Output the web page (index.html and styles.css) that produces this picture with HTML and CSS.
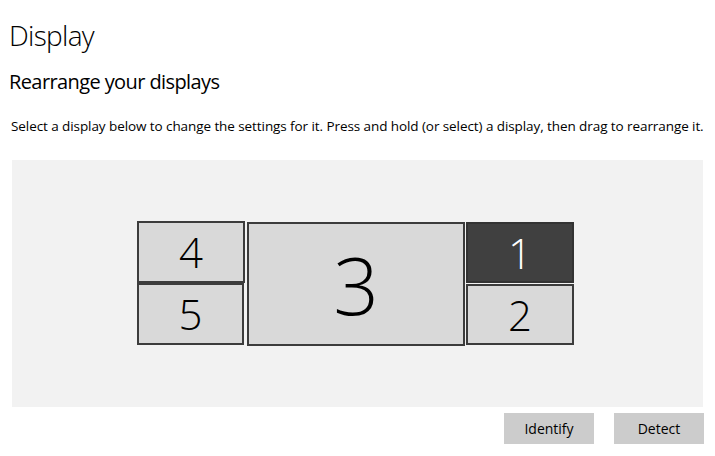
FILE: index.html
```html
<!DOCTYPE html>
<html lang="en">
<head>
<meta charset="utf-8">
<title>Display</title>
<link rel="stylesheet" href="styles.css">
</head>
<body>
<main class="page">
  <h1 class="title">Display</h1>
  <h2 class="subtitle">Rearrange your displays</h2>
  <p class="desc">Select a display below to change the settings for it. Press and hold (or select) a display, then drag to rearrange it.</p>
  <div class="canvas">
    <div class="mon mon-4"><span>4</span></div>
    <div class="mon mon-5"><span>5</span></div>
    <div class="mon mon-3"><span>3</span></div>
    <div class="mon mon-1 selected"><span>1</span></div>
    <div class="mon mon-2"><span>2</span></div>
  </div>
  <div class="actions">
    <button class="btn">Identify</button>
    <button class="btn">Detect</button>
  </div>
</main>
</body>
</html>
```

FILE: styles.css
```css
* { box-sizing: border-box; }
html, body { margin: 0; padding: 0; background: #fff; }
body {
  font-family: "Open Sans", "Noto Sans", "Liberation Sans", sans-serif;
  color: #000;
  width: 715px;
  height: 456px;
  overflow: hidden;
}
.page {
  display: flex;
  flex-direction: column;
  padding: 0 12px 0 12px;
}
.title {
  margin: 16px 0 0 -3px;
  font-size: 28px;
  font-weight: 300;
  line-height: 38px;
  letter-spacing: -0.7px;
}
.subtitle {
  margin: 15px 0 0 -3px;
  font-size: 20px;
  font-weight: 400;
  line-height: 26px;
  letter-spacing: -0.6px;
}
.desc {
  margin: 21px 0 0 -1px;
  font-size: 13.5px;
  letter-spacing: -0.08px;
  line-height: 20px;
  white-space: nowrap;
}
.canvas {
  position: relative;
  margin-top: 24px;
  width: 691px;
  height: 247px;
  background: #f2f2f2;
}
.mon {
  position: absolute;
  display: flex;
  align-items: center;
  justify-content: center;
  background: #d9d9d9;
  border: 2px solid #3c3c3c;
  font-weight: 300;
  font-size: 42px;
  color: #000;
}
.mon span { line-height: 1; }
.mon-4 { left: 125px; top: 61px; width: 108px; height: 62px; }
.mon-5 { left: 125px; top: 123px; width: 107px; height: 62px; }
.mon-3 { left: 235px; top: 62px; width: 218px; height: 124px; font-size: 80px; }
.mon-1 { left: 454px; top: 62px; width: 108px; height: 61px; }
.mon-2 { left: 454px; top: 124px; width: 108px; height: 61px; }
.mon.selected { background: #404040; border-color: #333; color: #fff; }
.actions {
  display: flex;
  justify-content: flex-end;
  gap: 20px;
  margin-top: 6px;
  width: 692px;
}
.btn {
  width: 90px;
  height: 31px;
  border: none;
  background: #cccccc;
  font-family: inherit;
  font-size: 14px;
  color: #000;
  padding: 0;
}
```
